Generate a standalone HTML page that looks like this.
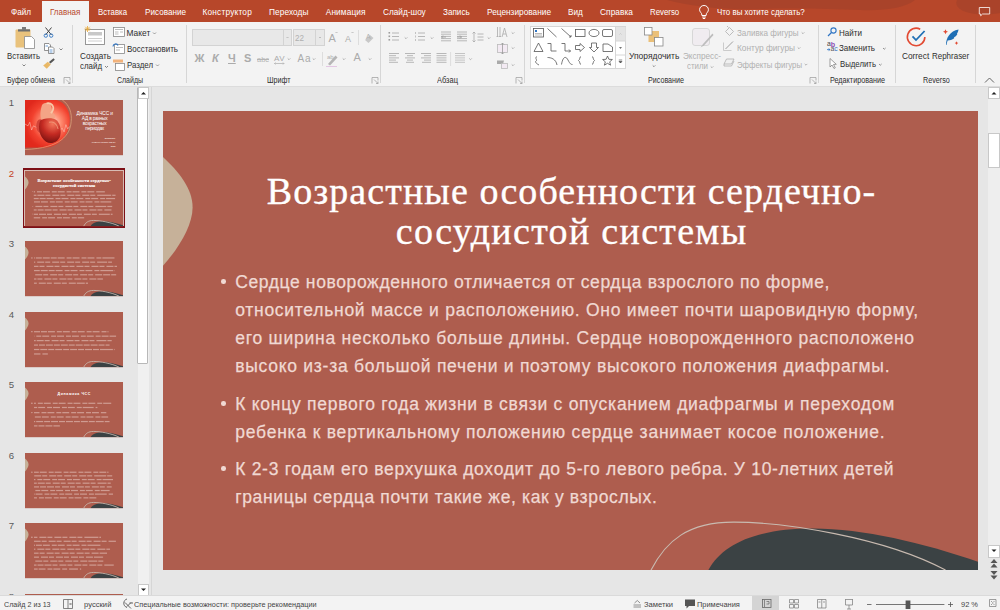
<!DOCTYPE html>
<html><head><meta charset="utf-8"><title>PowerPoint</title>
<style>
html,body{margin:0;padding:0;width:1000px;height:610px;overflow:hidden;background:#E6E6E6;}
.abs{position:absolute;}
.t{position:absolute;white-space:pre;}
svg{overflow:visible}
</style></head><body>
<div class="abs" style="left:0;top:0;width:1000px;height:610px;background:#E6E6E6"></div><div class="abs" style="left:0;top:87px;width:151px;height:509px;background:#E6E6E6;overflow:hidden">
</div>
<div class="abs" style="left:25px;top:100px;width:815px;height:459px;background:#AE5D4E;transform:scale(0.12025);transform-origin:0 0;overflow:hidden"><svg class="abs" style="left:0;top:0" width="815" height="459" viewBox="0 0 815 459">
<defs><radialGradient id="hg" gradientUnits="userSpaceOnUse" cx="215" cy="190" r="230"><stop offset="0" stop-color="#FFE6DA"/><stop offset="0.35" stop-color="#FF8F74"/><stop offset="0.7" stop-color="#F2412E"/><stop offset="1" stop-color="#E0281C"/></radialGradient>
<radialGradient id="hh" gradientUnits="userSpaceOnUse" cx="230" cy="200" r="170"><stop offset="0" stop-color="#F4765A"/><stop offset="0.5" stop-color="#C42A22"/><stop offset="1" stop-color="#6E0E0E"/></radialGradient></defs>
<path d="M0 0 H264 C330 20 380 90 372 179 C365 280 300 380 180 396 L0 396 Z" fill="url(#hg)"/>
<path d="M0 70 V396 H180 C120 390 60 350 30 290 Z" fill="#E42A1C" opacity="0.35"/>
<path d="M310 0 C370 40 392 110 384 180 C375 290 300 400 0 412" fill="none" stroke="#E9B98A" stroke-width="5"/>
<path d="M0 200 L25 215 L40 185 L55 250 L70 215 L100 230 M290 250 L310 235 L325 265 L340 205 L355 240 L372 220" fill="none" stroke="#FFD8CC" stroke-width="5" opacity="0.8"/>
<path d="M140 45 C150 20 195 15 210 35 C225 55 220 95 245 120 C262 140 240 175 205 175 L145 175 C120 140 128 85 140 45 Z" fill="#F4A486"/>
<path d="M180 30 C195 20 230 30 235 60 C238 80 225 100 215 110" fill="none" stroke="#F8C8A8" stroke-width="14"/>
<ellipse cx="125" cy="215" rx="32" ry="55" fill="#D2453A"/>
<path d="M125 175 C105 230 120 310 175 348 C215 372 275 355 292 300 C305 250 292 195 262 168 C230 145 150 148 125 175 Z" fill="url(#hh)"/>
<path d="M200 185 C235 175 265 195 275 240" fill="none" stroke="#F2A080" stroke-width="9" opacity="0.8"/>
</svg>
<div class="t" style="left:428.50px;top:87.14px;font-size:40px;line-height:50.0px;color:#FFFFFF;font-family:'Liberation Sans', sans-serif;letter-spacing:-0.788px;">Динамика ЧСС и</div>
<div class="t" style="left:472.00px;top:129.14px;font-size:40px;line-height:50.0px;color:#FFFFFF;font-family:'Liberation Sans', sans-serif;letter-spacing:-1.580px;">АД в разных</div>
<div class="t" style="left:480.00px;top:169.14px;font-size:40px;line-height:50.0px;color:#FFFFFF;font-family:'Liberation Sans', sans-serif;letter-spacing:-1.622px;">возрастных</div>
<div class="t" style="left:502.00px;top:209.14px;font-size:40px;line-height:50.0px;color:#FFFFFF;font-family:'Liberation Sans', sans-serif;letter-spacing:-2.779px;">периодах</div>
<div class="t" style="left:663.20px;top:307.51px;font-size:18px;line-height:22.5px;color:#F1DDD6;font-family:'Liberation Sans', sans-serif;letter-spacing:-1.449px;font-weight:bold">Выполнил:</div>
<div class="t" style="left:554.20px;top:340.51px;font-size:18px;line-height:22.5px;color:#F1DDD6;font-family:'Liberation Sans', sans-serif;letter-spacing:-0.068px;font-weight:bold">студент группы ПМ-21</div>
<div class="t" style="left:712.20px;top:374.51px;font-size:18px;line-height:22.5px;color:#F1DDD6;font-family:'Liberation Sans', sans-serif;letter-spacing:-0.016px;font-weight:bold">2022</div></div>
<div class="t" style="left:8.80px;top:97.37px;font-size:9.6px;line-height:12.0px;color:#5A5A5A;font-family:'Liberation Sans', sans-serif;">1</div>
<div class="abs" style="left:22.8px;top:168.2px;width:102.4px;height:59.8px;background:#7D1016"></div>
<div class="abs" style="left:24.4px;top:169.8px;width:99.2px;height:56.6px;background:#D8BCB4"></div>
<div class="abs" style="left:25px;top:170.5px;width:815px;height:459px;background:#AE5D4E;transform:scale(0.12025);transform-origin:0 0;overflow:hidden"><svg class="abs" style="left:0;top:0" width="815" height="459" viewBox="0 0 815 459"><path d="M0 46 C15 60 29.6 77 29.6 96.5 C29.6 115 15 138 0 154.8 Z" fill="#C6B199"/><path d="M545.4 459.5 L545.4 458.9 C560 432 595 417.5 650 417.5 C700 417.5 760 432 815 450.7 L815 459.5 Z" fill="#3B4244"/><path d="M488.2 459.5 L488.2 458.8 C503 430 525 411 570.6 411.1 C620 411 720 426 782 458.8 L782.5 459.5" fill="none" stroke="#C8BAB0" stroke-width="7"/></svg>
<div class="t" style="left:103.75px;top:57.42px;font-size:38px;line-height:47.5px;color:#FFFFFF;font-family:'Liberation Serif', serif;letter-spacing:1.067px;-webkit-text-stroke:1.6px #fff">Возрастные особенности сердечно-</div>
<div class="t" style="left:232.75px;top:97.83px;font-size:38px;line-height:47.5px;color:#FFFFFF;font-family:'Liberation Serif', serif;letter-spacing:1.301px;-webkit-text-stroke:1.6px #fff">сосудистой системы</div>
<div class="abs" style="left:73.0px;top:168.2px;width:591.2px;height:10px;background:repeating-linear-gradient(90deg,#F0D9D3 0 58px,transparent 58px 70px,#F0D9D3 70px 112px,transparent 112px 124px);background-position:-47px 0;opacity:0.5"></div>
<div class="abs" style="left:58.2px;top:168.6px;width:4.6px;height:4.6px;border-radius:50%;background:#F0D9D3"></div>
<div class="abs" style="left:73.0px;top:196.8px;width:679.8px;height:10px;background:repeating-linear-gradient(90deg,#F0D9D3 0 58px,transparent 58px 70px,#F0D9D3 70px 112px,transparent 112px 124px);background-position:-94px 0;opacity:0.5"></div>
<div class="abs" style="left:73.0px;top:224.4px;width:675.9px;height:10px;background:repeating-linear-gradient(90deg,#F0D9D3 0 58px,transparent 58px 70px,#F0D9D3 70px 112px,transparent 112px 124px);background-position:-17px 0;opacity:0.5"></div>
<div class="abs" style="left:73.0px;top:252.1px;width:651.3px;height:10px;background:repeating-linear-gradient(90deg,#F0D9D3 0 58px,transparent 58px 70px,#F0D9D3 70px 112px,transparent 112px 124px);background-position:-64px 0;opacity:0.5"></div>
<div class="abs" style="left:73.0px;top:290.2px;width:656.0px;height:10px;background:repeating-linear-gradient(90deg,#F0D9D3 0 58px,transparent 58px 70px,#F0D9D3 70px 112px,transparent 112px 124px);background-position:-111px 0;opacity:0.5"></div>
<div class="abs" style="left:58.2px;top:290.6px;width:4.6px;height:4.6px;border-radius:50%;background:#F0D9D3"></div>
<div class="abs" style="left:73.0px;top:318.5px;width:646.4px;height:10px;background:repeating-linear-gradient(90deg,#F0D9D3 0 58px,transparent 58px 70px,#F0D9D3 70px 112px,transparent 112px 124px);background-position:-34px 0;opacity:0.5"></div>
<div class="abs" style="left:73.0px;top:355.2px;width:655.4px;height:10px;background:repeating-linear-gradient(90deg,#F0D9D3 0 58px,transparent 58px 70px,#F0D9D3 70px 112px,transparent 112px 124px);background-position:-81px 0;opacity:0.5"></div>
<div class="abs" style="left:58.2px;top:355.6px;width:4.6px;height:4.6px;border-radius:50%;background:#F0D9D3"></div>
<div class="abs" style="left:73.0px;top:383.6px;width:418.6px;height:10px;background:repeating-linear-gradient(90deg,#F0D9D3 0 58px,transparent 58px 70px,#F0D9D3 70px 112px,transparent 112px 124px);background-position:-4px 0;opacity:0.5"></div></div>
<div class="t" style="left:8.80px;top:167.87px;font-size:9.6px;line-height:12.0px;color:#C43E1C;font-family:'Liberation Sans', sans-serif;">2</div>
<div class="abs" style="left:25px;top:241px;width:815px;height:459px;background:#AE5D4E;transform:scale(0.12025);transform-origin:0 0;overflow:hidden"><svg class="abs" style="left:0;top:0" width="815" height="459" viewBox="0 0 815 459"><path d="M0 46 C15 60 29.6 77 29.6 96.5 C29.6 115 15 138 0 154.8 Z" fill="#C6B199"/><path d="M545.4 459.5 L545.4 458.9 C560 432 595 417.5 650 417.5 C700 417.5 760 432 815 450.7 L815 459.5 Z" fill="#3B4244"/><path d="M488.2 459.5 L488.2 458.8 C503 430 525 411 570.6 411.1 C620 411 720 426 782 458.8 L782.5 459.5" fill="none" stroke="#C8BAB0" stroke-width="7"/></svg>
<div class="abs" style="left:75.0px;top:136.0px;width:669.0px;height:10px;background:repeating-linear-gradient(90deg,#F0D9D3 0 58px,transparent 58px 70px,#F0D9D3 70px 112px,transparent 112px 124px);background-position:-51px 0;opacity:0.5"></div>
<div class="abs" style="left:52px;top:135px;width:11px;height:11px;border-radius:50%;background:#F0D9D3;opacity:0.7"></div>
<div class="abs" style="left:75.0px;top:171.0px;width:648.0px;height:10px;background:repeating-linear-gradient(90deg,#F0D9D3 0 58px,transparent 58px 70px,#F0D9D3 70px 112px,transparent 112px 124px);background-position:-98px 0;opacity:0.5"></div>
<div class="abs" style="left:75.0px;top:206.0px;width:690.0px;height:10px;background:repeating-linear-gradient(90deg,#F0D9D3 0 58px,transparent 58px 70px,#F0D9D3 70px 112px,transparent 112px 124px);background-position:-21px 0;opacity:0.5"></div>
<div class="abs" style="left:75.0px;top:241.0px;width:669.0px;height:10px;background:repeating-linear-gradient(90deg,#F0D9D3 0 58px,transparent 58px 70px,#F0D9D3 70px 112px,transparent 112px 124px);background-position:-68px 0;opacity:0.5"></div>
<div class="abs" style="left:75.0px;top:276.0px;width:690.0px;height:10px;background:repeating-linear-gradient(90deg,#F0D9D3 0 58px,transparent 58px 70px,#F0D9D3 70px 112px,transparent 112px 124px);background-position:-115px 0;opacity:0.5"></div>
<div class="abs" style="left:75.0px;top:311.0px;width:573.0px;height:10px;background:repeating-linear-gradient(90deg,#F0D9D3 0 58px,transparent 58px 70px,#F0D9D3 70px 112px,transparent 112px 124px);background-position:-38px 0;opacity:0.5"></div>
<div class="abs" style="left:75.0px;top:346.0px;width:449.0px;height:10px;background:repeating-linear-gradient(90deg,#F0D9D3 0 58px,transparent 58px 70px,#F0D9D3 70px 112px,transparent 112px 124px);background-position:-85px 0;opacity:0.5"></div></div>
<div class="t" style="left:8.80px;top:238.37px;font-size:9.6px;line-height:12.0px;color:#5A5A5A;font-family:'Liberation Sans', sans-serif;">3</div>
<div class="abs" style="left:25px;top:311.5px;width:815px;height:459px;background:#AE5D4E;transform:scale(0.12025);transform-origin:0 0;overflow:hidden"><svg class="abs" style="left:0;top:0" width="815" height="459" viewBox="0 0 815 459"><path d="M0 46 C15 60 29.6 77 29.6 96.5 C29.6 115 15 138 0 154.8 Z" fill="#C6B199"/><path d="M545.4 459.5 L545.4 458.9 C560 432 595 417.5 650 417.5 C700 417.5 760 432 815 450.7 L815 459.5 Z" fill="#3B4244"/><path d="M488.2 459.5 L488.2 458.8 C503 430 525 411 570.6 411.1 C620 411 720 426 782 458.8 L782.5 459.5" fill="none" stroke="#C8BAB0" stroke-width="7"/></svg>
<div class="abs" style="left:75.0px;top:159.0px;width:619.0px;height:10px;background:repeating-linear-gradient(90deg,#F0D9D3 0 58px,transparent 58px 70px,#F0D9D3 70px 112px,transparent 112px 124px);background-position:-8px 0;opacity:0.5"></div>
<div class="abs" style="left:52px;top:158px;width:11px;height:11px;border-radius:50%;background:#F0D9D3;opacity:0.7"></div>
<div class="abs" style="left:75.0px;top:196.0px;width:683.0px;height:10px;background:repeating-linear-gradient(90deg,#F0D9D3 0 58px,transparent 58px 70px,#F0D9D3 70px 112px,transparent 112px 124px);background-position:-55px 0;opacity:0.5"></div>
<div class="abs" style="left:75.0px;top:233.0px;width:646.0px;height:10px;background:repeating-linear-gradient(90deg,#F0D9D3 0 58px,transparent 58px 70px,#F0D9D3 70px 112px,transparent 112px 124px);background-position:-102px 0;opacity:0.5"></div>
<div class="abs" style="left:75.0px;top:270.0px;width:628.0px;height:10px;background:repeating-linear-gradient(90deg,#F0D9D3 0 58px,transparent 58px 70px,#F0D9D3 70px 112px,transparent 112px 124px);background-position:-25px 0;opacity:0.5"></div>
<div class="abs" style="left:75.0px;top:307.0px;width:670.0px;height:10px;background:repeating-linear-gradient(90deg,#F0D9D3 0 58px,transparent 58px 70px,#F0D9D3 70px 112px,transparent 112px 124px);background-position:-72px 0;opacity:0.5"></div>
<div class="abs" style="left:75.0px;top:344.0px;width:115.0px;height:10px;background:repeating-linear-gradient(90deg,#F0D9D3 0 58px,transparent 58px 70px,#F0D9D3 70px 112px,transparent 112px 124px);background-position:-119px 0;opacity:0.5"></div></div>
<div class="t" style="left:8.80px;top:308.87px;font-size:9.6px;line-height:12.0px;color:#5A5A5A;font-family:'Liberation Sans', sans-serif;">4</div>
<div class="abs" style="left:25px;top:382px;width:815px;height:459px;background:#AE5D4E;transform:scale(0.12025);transform-origin:0 0;overflow:hidden"><svg class="abs" style="left:0;top:0" width="815" height="459" viewBox="0 0 815 459"><path d="M0 46 C15 60 29.6 77 29.6 96.5 C29.6 115 15 138 0 154.8 Z" fill="#C6B199"/><path d="M545.4 459.5 L545.4 458.9 C560 432 595 417.5 650 417.5 C700 417.5 760 432 815 450.7 L815 459.5 Z" fill="#3B4244"/><path d="M488.2 459.5 L488.2 458.8 C503 430 525 411 570.6 411.1 C620 411 720 426 782 458.8 L782.5 459.5" fill="none" stroke="#C8BAB0" stroke-width="7"/></svg>
<div class="t" style="left:271.00px;top:78.86px;font-size:30px;line-height:37.5px;color:#FFFFFF;font-family:'Liberation Sans', sans-serif;letter-spacing:4.845px;font-weight:bold">Динамика ЧСС</div>
<div class="abs" style="left:75.0px;top:172.0px;width:642.0px;height:10px;background:repeating-linear-gradient(90deg,#F0D9D3 0 58px,transparent 58px 70px,#F0D9D3 70px 112px,transparent 112px 124px);background-position:-42px 0;opacity:0.5"></div>
<div class="abs" style="left:52px;top:171px;width:11px;height:11px;border-radius:50%;background:#F0D9D3;opacity:0.7"></div>
<div class="abs" style="left:75.0px;top:207.0px;width:527.0px;height:10px;background:repeating-linear-gradient(90deg,#F0D9D3 0 58px,transparent 58px 70px,#F0D9D3 70px 112px,transparent 112px 124px);background-position:-89px 0;opacity:0.5"></div>
<div class="abs" style="left:75.0px;top:250.0px;width:601.0px;height:10px;background:repeating-linear-gradient(90deg,#F0D9D3 0 58px,transparent 58px 70px,#F0D9D3 70px 112px,transparent 112px 124px);background-position:-12px 0;opacity:0.5"></div>
<div class="abs" style="left:52px;top:249px;width:11px;height:11px;border-radius:50%;background:#F0D9D3;opacity:0.7"></div>
<div class="abs" style="left:75.0px;top:286.0px;width:619.0px;height:10px;background:repeating-linear-gradient(90deg,#F0D9D3 0 58px,transparent 58px 70px,#F0D9D3 70px 112px,transparent 112px 124px);background-position:-59px 0;opacity:0.5"></div>
<div class="abs" style="left:75.0px;top:324.0px;width:628.0px;height:10px;background:repeating-linear-gradient(90deg,#F0D9D3 0 58px,transparent 58px 70px,#F0D9D3 70px 112px,transparent 112px 124px);background-position:-106px 0;opacity:0.5"></div>
<div class="abs" style="left:75.0px;top:360.0px;width:215.0px;height:10px;background:repeating-linear-gradient(90deg,#F0D9D3 0 58px,transparent 58px 70px,#F0D9D3 70px 112px,transparent 112px 124px);background-position:-29px 0;opacity:0.5"></div></div>
<div class="t" style="left:8.80px;top:379.37px;font-size:9.6px;line-height:12.0px;color:#5A5A5A;font-family:'Liberation Sans', sans-serif;">5</div>
<div class="abs" style="left:25px;top:452.5px;width:815px;height:459px;background:#AE5D4E;transform:scale(0.12025);transform-origin:0 0;overflow:hidden"><svg class="abs" style="left:0;top:0" width="815" height="459" viewBox="0 0 815 459"><path d="M0 46 C15 60 29.6 77 29.6 96.5 C29.6 115 15 138 0 154.8 Z" fill="#C6B199"/><path d="M545.4 459.5 L545.4 458.9 C560 432 595 417.5 650 417.5 C700 417.5 760 432 815 450.7 L815 459.5 Z" fill="#3B4244"/><path d="M488.2 459.5 L488.2 458.8 C503 430 525 411 570.6 411.1 C620 411 720 426 782 458.8 L782.5 459.5" fill="none" stroke="#C8BAB0" stroke-width="7"/></svg>
<div class="abs" style="left:75.0px;top:155.0px;width:619.0px;height:10px;background:repeating-linear-gradient(90deg,#F0D9D3 0 58px,transparent 58px 70px,#F0D9D3 70px 112px,transparent 112px 124px);background-position:-76px 0;opacity:0.5"></div>
<div class="abs" style="left:52px;top:154.0px;width:11px;height:11px;border-radius:50%;background:#F0D9D3;opacity:0.7"></div>
<div class="abs" style="left:75.0px;top:185.4px;width:665.0px;height:10px;background:repeating-linear-gradient(90deg,#F0D9D3 0 58px,transparent 58px 70px,#F0D9D3 70px 112px,transparent 112px 124px);background-position:-123px 0;opacity:0.5"></div>
<div class="abs" style="left:75.0px;top:215.8px;width:657.0px;height:10px;background:repeating-linear-gradient(90deg,#F0D9D3 0 58px,transparent 58px 70px,#F0D9D3 70px 112px,transparent 112px 124px);background-position:-46px 0;opacity:0.5"></div>
<div class="abs" style="left:75.0px;top:246.2px;width:638.0px;height:10px;background:repeating-linear-gradient(90deg,#F0D9D3 0 58px,transparent 58px 70px,#F0D9D3 70px 112px,transparent 112px 124px);background-position:-93px 0;opacity:0.5"></div>
<div class="abs" style="left:75.0px;top:276.6px;width:646.0px;height:10px;background:repeating-linear-gradient(90deg,#F0D9D3 0 58px,transparent 58px 70px,#F0D9D3 70px 112px,transparent 112px 124px);background-position:-16px 0;opacity:0.5"></div>
<div class="abs" style="left:75.0px;top:307.0px;width:634.0px;height:10px;background:repeating-linear-gradient(90deg,#F0D9D3 0 58px,transparent 58px 70px,#F0D9D3 70px 112px,transparent 112px 124px);background-position:-63px 0;opacity:0.5"></div>
<div class="abs" style="left:75.0px;top:337.4px;width:657.0px;height:10px;background:repeating-linear-gradient(90deg,#F0D9D3 0 58px,transparent 58px 70px,#F0D9D3 70px 112px,transparent 112px 124px);background-position:-110px 0;opacity:0.5"></div>
<div class="abs" style="left:75.0px;top:367.8px;width:518.0px;height:10px;background:repeating-linear-gradient(90deg,#F0D9D3 0 58px,transparent 58px 70px,#F0D9D3 70px 112px,transparent 112px 124px);background-position:-33px 0;opacity:0.5"></div></div>
<div class="t" style="left:8.80px;top:449.87px;font-size:9.6px;line-height:12.0px;color:#5A5A5A;font-family:'Liberation Sans', sans-serif;">6</div>
<div class="abs" style="left:25px;top:523px;width:815px;height:459px;background:#AE5D4E;transform:scale(0.12025);transform-origin:0 0;overflow:hidden"><svg class="abs" style="left:0;top:0" width="815" height="459" viewBox="0 0 815 459"><path d="M0 46 C15 60 29.6 77 29.6 96.5 C29.6 115 15 138 0 154.8 Z" fill="#C6B199"/><path d="M545.4 459.5 L545.4 458.9 C560 432 595 417.5 650 417.5 C700 417.5 760 432 815 450.7 L815 459.5 Z" fill="#3B4244"/><path d="M488.2 459.5 L488.2 458.8 C503 430 525 411 570.6 411.1 C620 411 720 426 782 458.8 L782.5 459.5" fill="none" stroke="#C8BAB0" stroke-width="7"/></svg>
<div class="abs" style="left:75.0px;top:114.0px;width:557.0px;height:10px;background:repeating-linear-gradient(90deg,#F0D9D3 0 58px,transparent 58px 70px,#F0D9D3 70px 112px,transparent 112px 124px);background-position:-80px 0;opacity:0.5"></div>
<div class="abs" style="left:52px;top:113px;width:11px;height:11px;border-radius:50%;background:#F0D9D3;opacity:0.7"></div>
<div class="abs" style="left:75.0px;top:147.0px;width:681.0px;height:10px;background:repeating-linear-gradient(90deg,#F0D9D3 0 58px,transparent 58px 70px,#F0D9D3 70px 112px,transparent 112px 124px);background-position:-3px 0;opacity:0.5"></div>
<div class="abs" style="left:75.0px;top:180.0px;width:552.0px;height:10px;background:repeating-linear-gradient(90deg,#F0D9D3 0 58px,transparent 58px 70px,#F0D9D3 70px 112px,transparent 112px 124px);background-position:-50px 0;opacity:0.5"></div>
<div class="abs" style="left:75.0px;top:213.0px;width:632.0px;height:10px;background:repeating-linear-gradient(90deg,#F0D9D3 0 58px,transparent 58px 70px,#F0D9D3 70px 112px,transparent 112px 124px);background-position:-97px 0;opacity:0.5"></div>
<div class="abs" style="left:75.0px;top:246.0px;width:607.0px;height:10px;background:repeating-linear-gradient(90deg,#F0D9D3 0 58px,transparent 58px 70px,#F0D9D3 70px 112px,transparent 112px 124px);background-position:-20px 0;opacity:0.5"></div>
<div class="abs" style="left:75.0px;top:279.0px;width:582.0px;height:10px;background:repeating-linear-gradient(90deg,#F0D9D3 0 58px,transparent 58px 70px,#F0D9D3 70px 112px,transparent 112px 124px);background-position:-67px 0;opacity:0.5"></div>
<div class="abs" style="left:75.0px;top:312.0px;width:582.0px;height:10px;background:repeating-linear-gradient(90deg,#F0D9D3 0 58px,transparent 58px 70px,#F0D9D3 70px 112px,transparent 112px 124px);background-position:-114px 0;opacity:0.5"></div>
<div class="abs" style="left:75.0px;top:345.0px;width:663.0px;height:10px;background:repeating-linear-gradient(90deg,#F0D9D3 0 58px,transparent 58px 70px,#F0D9D3 70px 112px,transparent 112px 124px);background-position:-37px 0;opacity:0.5"></div>
<div class="abs" style="left:75.0px;top:378.0px;width:392.0px;height:10px;background:repeating-linear-gradient(90deg,#F0D9D3 0 58px,transparent 58px 70px,#F0D9D3 70px 112px,transparent 112px 124px);background-position:-84px 0;opacity:0.5"></div></div>
<div class="t" style="left:8.80px;top:520.37px;font-size:9.6px;line-height:12.0px;color:#5A5A5A;font-family:'Liberation Sans', sans-serif;">7</div>
<div class="abs" style="left:25px;top:593.5px;width:815px;height:459px;background:#AE5D4E;transform:scale(0.12025);transform-origin:0 0;overflow:hidden"></div>
<div class="t" style="left:8.80px;top:590.87px;font-size:9.6px;line-height:12.0px;color:#5A5A5A;font-family:'Liberation Sans', sans-serif;">8</div>
<div class="abs" style="left:137.5px;top:86.5px;width:11px;height:509.5px;background:#F0F0F0"></div>
<div class="abs" style="left:137.3px;top:86.5px;width:9.2px;height:275px;background:#fff;border:1px solid #B8B8B8;border-radius:1px"></div>
<div class="abs" style="left:137.5px;top:86.5px;width:9px;height:10.5px;background:#fff;border:1px solid #C8C8C8"></div>
<div class="abs" style="left:137.5px;top:584.3px;width:9px;height:10.5px;background:#fff;border:1px solid #C8C8C8"></div>
<svg class="abs" style="left:137.5px;top:86.5px" width="11" height="12"><path d="M3 7.5 L5.5 5 L8 7.5 Z" fill="#222"/></svg>
<svg class="abs" style="left:137.5px;top:584.3px" width="11" height="12"><path d="M3 4.5 L5.5 7 L8 4.5 Z" fill="#222"/></svg>
<div class="abs" style="left:151px;top:87px;width:1px;height:509px;background:#D6D6D6"></div><div class="abs" style="left:163px;top:110.6px;width:815px;height:459px;background:#AE5D4E;overflow:hidden"><svg class="abs" style="left:0;top:0" width="815" height="459" viewBox="0 0 815 459"><path d="M0 46 C15 60 29.6 77 29.6 96.5 C29.6 115 15 138 0 154.8 Z" fill="#C6B199"/><path d="M545.4 459.5 L545.4 458.9 C560 432 595 417.5 650 417.5 C700 417.5 760 432 815 450.7 L815 459.5 Z" fill="#3B4244"/><path d="M488.2 459.5 L488.2 458.8 C503 430 525 411 570.6 411.1 C620 411 720 426 782 458.8 L782.5 459.5" fill="none" stroke="#C8BAB0" stroke-width="1.1"/></svg>
<div class="t" style="left:103.75px;top:57.42px;font-size:38px;line-height:47.5px;color:#FFFFFF;font-family:'Liberation Serif', serif;letter-spacing:1.067px;-webkit-text-stroke:0.35px #fff">Возрастные особенности сердечно-</div>
<div class="t" style="left:232.75px;top:97.83px;font-size:38px;line-height:47.5px;color:#FFFFFF;font-family:'Liberation Serif', serif;letter-spacing:1.301px;-webkit-text-stroke:0.35px #fff">сосудистой системы</div>
<div class="t" style="left:72.20px;top:161.20px;font-size:17.5px;line-height:21.88px;color:#F0D9D3;font-family:'Liberation Sans', sans-serif;letter-spacing:0.618px;-webkit-text-stroke:0.25px #F0D9D3">Сердце новорожденного отличается от сердца взрослого по форме,</div>
<div class="abs" style="left:58.2px;top:168.6px;width:4.6px;height:4.6px;border-radius:50%;background:#F0D9D3"></div>
<div class="t" style="left:72.20px;top:189.80px;font-size:17.5px;line-height:21.88px;color:#F0D9D3;font-family:'Liberation Sans', sans-serif;letter-spacing:0.722px;-webkit-text-stroke:0.25px #F0D9D3">относительной массе и расположению. Оно имеет почти шаровидную форму,</div>
<div class="t" style="left:72.20px;top:217.40px;font-size:17.5px;line-height:21.88px;color:#F0D9D3;font-family:'Liberation Sans', sans-serif;letter-spacing:0.767px;-webkit-text-stroke:0.25px #F0D9D3">его ширина несколько больше длины. Сердце новорожденного расположено</div>
<div class="t" style="left:72.20px;top:245.10px;font-size:17.5px;line-height:21.88px;color:#F0D9D3;font-family:'Liberation Sans', sans-serif;letter-spacing:0.731px;-webkit-text-stroke:0.25px #F0D9D3">высоко из-за большой печени и поэтому высокого положения диафрагмы.</div>
<div class="t" style="left:72.20px;top:283.20px;font-size:17.5px;line-height:21.88px;color:#F0D9D3;font-family:'Liberation Sans', sans-serif;letter-spacing:0.741px;-webkit-text-stroke:0.25px #F0D9D3">К концу первого года жизни в связи с опусканием диафрагмы и переходом</div>
<div class="abs" style="left:58.2px;top:290.6px;width:4.6px;height:4.6px;border-radius:50%;background:#F0D9D3"></div>
<div class="t" style="left:72.20px;top:311.50px;font-size:17.5px;line-height:21.88px;color:#F0D9D3;font-family:'Liberation Sans', sans-serif;letter-spacing:0.789px;-webkit-text-stroke:0.25px #F0D9D3">ребенка к вертикальному положению сердце занимает косое положение.</div>
<div class="t" style="left:72.20px;top:348.20px;font-size:17.5px;line-height:21.88px;color:#F0D9D3;font-family:'Liberation Sans', sans-serif;letter-spacing:0.710px;-webkit-text-stroke:0.25px #F0D9D3">К 2-3 годам его верхушка доходит до 5-го левого ребра. У 10-летних детей</div>
<div class="abs" style="left:58.2px;top:355.6px;width:4.6px;height:4.6px;border-radius:50%;background:#F0D9D3"></div>
<div class="t" style="left:72.20px;top:376.60px;font-size:17.5px;line-height:21.88px;color:#F0D9D3;font-family:'Liberation Sans', sans-serif;letter-spacing:0.649px;-webkit-text-stroke:0.25px #F0D9D3">границы сердца почти такие же, как у взрослых.</div></div>
<div class="abs" style="left:988px;top:87px;width:12px;height:470px;background:#EEEEEE"></div>
<div class="abs" style="left:988px;top:86.6px;width:10px;height:10.5px;background:#fff;border:1px solid #C8C8C8"></div>
<div class="abs" style="left:988px;top:132.5px;width:10px;height:33px;background:#fff;border:1px solid #C8C8C8"></div>
<div class="abs" style="left:988px;top:545.3px;width:10px;height:10.6px;background:#fff;border:1px solid #C8C8C8"></div>
<svg class="abs" style="left:988px;top:86.6px" width="12" height="12"><path d="M3.5 7.5 L6 5 L8.5 7.5 Z" fill="#222"/></svg>
<svg class="abs" style="left:988px;top:545.3px" width="12" height="12"><path d="M3.5 4.5 L6 7 L8.5 4.5 Z" fill="#222"/></svg>
<svg class="abs" style="left:988px;top:557px" width="12" height="24"><path d="M2.5 6 L6 2 L9.5 6 Z M2.5 10.5 L6 6.5 L9.5 10.5 Z M2.5 14 L6 18 L9.5 14 Z M2.5 18.5 L6 22.5 L9.5 18.5 Z" fill="#555"/></svg><div class="abs" style="left:0;top:596px;width:1000px;height:14px;background:#F3F3F3"></div>
<div class="abs" style="left:0;top:595px;width:1000px;height:1px;background:#DADADA"></div>
<div class="abs" style="left:752.4px;top:596px;width:27px;height:14px;background:#D4D4D4"></div>
<div class="t" style="left:4.30px;top:600.33px;font-size:8px;line-height:10.0px;color:#444;font-family:'Liberation Sans', sans-serif;transform:scaleX(0.8929);transform-origin:0 0;">Слайд 2 из 13</div>
<div class="t" style="left:84.30px;top:600.33px;font-size:8px;line-height:10.0px;color:#444;font-family:'Liberation Sans', sans-serif;transform:scaleX(0.9541);transform-origin:0 0;">русский</div>
<div class="t" style="left:133.90px;top:600.33px;font-size:8px;line-height:10.0px;color:#444;font-family:'Liberation Sans', sans-serif;transform:scaleX(0.9102);transform-origin:0 0;">Специальные возможности: проверьте рекомендации</div>
<div class="t" style="left:643.90px;top:600.33px;font-size:8px;line-height:10.0px;color:#444;font-family:'Liberation Sans', sans-serif;transform:scaleX(0.9474);transform-origin:0 0;">Заметки</div>
<div class="t" style="left:697.10px;top:600.33px;font-size:8px;line-height:10.0px;color:#444;font-family:'Liberation Sans', sans-serif;transform:scaleX(0.9267);transform-origin:0 0;">Примечания</div>
<div class="t" style="left:961.10px;top:600.33px;font-size:8px;line-height:10.0px;color:#444;font-family:'Liberation Sans', sans-serif;transform:scaleX(0.9323);transform-origin:0 0;">92 %</div>
<svg class="abs" style="left:0;top:0" width="1000" height="610" viewBox="0 0 1000 610"><path d="M63.5 599.5 H68 V608.5 H63.5 Z M68 599.5 H72.5 V608.5 H68" fill="none" stroke="#666" stroke-width="0.8"/><path d="M69.5 603 L71.5 605 M71.5 603 L69.5 605" stroke="#666" stroke-width="0.7"/><path d="M127 599 C123 600 122.5 606 127 607.5 M125 602.5 L131 608.5 M131 602.5 L127 606.5 M129.5 603 H133" fill="none" stroke="#555" stroke-width="0.9"/><path d="M633.5 605 H641 M633.5 607 H641 M634.5 603 L637.3 600.5 L640 603" fill="none" stroke="#777" stroke-width="0.8"/><path d="M685 599.5 H695 V606 H689 L686.5 608.5 V606 H685 Z" fill="#555"/><rect x="762.5" y="599.5" width="8.5" height="8" fill="none" stroke="#666" stroke-width="0.8"/><path d="M764.5 600 V607 M766.5 601.5 H769 V604 H766.5" fill="none" stroke="#666" stroke-width="0.7"/><path d="M789.5 599.5 H793.5 V603 H789.5 Z M794.5 599.5 H798.5 V603 H794.5 Z M789.5 604.5 H793.5 V608 H789.5 Z M794.5 604.5 H798.5 V608 H794.5 Z" fill="none" stroke="#777" stroke-width="0.7"/><path d="M817.5 599.5 H826 V608 H817.5 Z M821.75 599.5 V608 M818.5 602 H820.5 M823 602 H825" fill="none" stroke="#777" stroke-width="0.7"/><path d="M845 599.5 H853 M845.5 599.5 V605 H852.5 V599.5 M849 605 V609 M847 609 H851" fill="none" stroke="#777" stroke-width="0.7"/><path d="M867 604.5 H871.5 M876 604.5 H944.4 M948 604.5 H953 M950.5 602 V607" stroke="#555" stroke-width="0.8"/><rect x="905.6" y="600.5" width="4.8" height="8.5" fill="#555"/><path d="M989.5 599.5 H996 V606.5 H989.5 Z M991 601 L992.5 602.5 M994.5 601 L993 602.5 M991 605 L992.5 603.5 M994.5 605 L993 603.5" fill="none" stroke="#777" stroke-width="0.7"/></svg><div class="abs" style="left:0;top:0;width:1000px;height:22px;background:#B7472A"></div>
<svg class="abs" style="left:0;top:0" width="1000" height="22" viewBox="0 0 1000 22">
<path d="M667 0 C690 6 720 10 760 9 C800 8 830 9 860 10 C885 11 905 8 915 0 Z" fill="#9E3F2A" opacity="0.55"/>
<path d="M957 0 C954 6 960 12 975 14 C985 15 995 14 1000 13 V0 Z" fill="#9E3F2A" opacity="0.5"/>
</svg>
<div class="abs" style="left:42px;top:1px;width:47px;height:21px;background:#F3F3F3"></div>
<div class="t" style="left:10.50px;top:7.13px;font-size:8.3px;line-height:10.38px;color:#FFFFFF;font-family:'Liberation Sans', sans-serif;transform:scaleX(0.9801);transform-origin:0 0;">Файл</div>
<div class="t" style="left:50.10px;top:7.13px;font-size:8.3px;line-height:10.38px;color:#B7472A;font-family:'Liberation Sans', sans-serif;transform:scaleX(0.9622);transform-origin:0 0;">Главная</div>
<div class="t" style="left:97.90px;top:7.13px;font-size:8.3px;line-height:10.38px;color:#FFFFFF;font-family:'Liberation Sans', sans-serif;transform:scaleX(0.9402);transform-origin:0 0;">Вставка</div>
<div class="t" style="left:144.50px;top:7.13px;font-size:8.3px;line-height:10.38px;color:#FFFFFF;font-family:'Liberation Sans', sans-serif;transform:scaleX(0.9809);transform-origin:0 0;">Рисование</div>
<div class="t" style="left:202.50px;top:7.13px;font-size:8.3px;line-height:10.38px;color:#FFFFFF;font-family:'Liberation Sans', sans-serif;letter-spacing:0.194px;">Конструктор</div>
<div class="t" style="left:269.00px;top:7.13px;font-size:8.3px;line-height:10.38px;color:#FFFFFF;font-family:'Liberation Sans', sans-serif;letter-spacing:0.083px;">Переходы</div>
<div class="t" style="left:325.75px;top:7.13px;font-size:8.3px;line-height:10.38px;color:#FFFFFF;font-family:'Liberation Sans', sans-serif;letter-spacing:0.114px;">Анимация</div>
<div class="t" style="left:382.75px;top:7.13px;font-size:8.3px;line-height:10.38px;color:#FFFFFF;font-family:'Liberation Sans', sans-serif;transform:scaleX(0.9938);transform-origin:0 0;">Слайд-шоу</div>
<div class="t" style="left:442.50px;top:7.13px;font-size:8.3px;line-height:10.38px;color:#FFFFFF;font-family:'Liberation Sans', sans-serif;transform:scaleX(0.9822);transform-origin:0 0;">Запись</div>
<div class="t" style="left:487.00px;top:7.13px;font-size:8.3px;line-height:10.38px;color:#FFFFFF;font-family:'Liberation Sans', sans-serif;transform:scaleX(0.9988);transform-origin:0 0;">Рецензирование</div>
<div class="t" style="left:568.25px;top:7.13px;font-size:8.3px;line-height:10.38px;color:#FFFFFF;font-family:'Liberation Sans', sans-serif;transform:scaleX(0.9823);transform-origin:0 0;">Вид</div>
<div class="t" style="left:600.00px;top:7.13px;font-size:8.3px;line-height:10.38px;color:#FFFFFF;font-family:'Liberation Sans', sans-serif;letter-spacing:0.073px;">Справка</div>
<div class="t" style="left:650.00px;top:7.13px;font-size:8.3px;line-height:10.38px;color:#FFFFFF;font-family:'Liberation Sans', sans-serif;transform:scaleX(0.9464);transform-origin:0 0;">Reverso</div>
<div class="t" style="left:716.50px;top:7.13px;font-size:8.3px;line-height:10.38px;color:#FFFFFF;font-family:'Liberation Sans', sans-serif;transform:scaleX(0.9566);transform-origin:0 0;">Что вы хотите сделать?</div>
<svg class="abs" style="left:697px;top:4px" width="14" height="16" viewBox="0 0 14 16">
<path d="M7 1.5 C4.3 1.5 2.6 3.4 2.6 5.7 C2.6 7.5 3.8 8.4 4.6 9.6 L4.9 11.5 L9.1 11.5 L9.4 9.6 C10.2 8.4 11.4 7.5 11.4 5.7 C11.4 3.4 9.7 1.5 7 1.5 Z" fill="none" stroke="#fff" stroke-width="1"/>
<path d="M5.2 13 H8.8 M5.8 14.5 H8.2" stroke="#fff" stroke-width="1"/></svg>
<svg class="abs" style="left:978px;top:6px" width="13" height="11" viewBox="0 0 13 11">
<path d="M1.3 1.5 H11.7 V8 H4.5 L2.7 9.8 V8 H1.3 Z" fill="none" stroke="#fff" stroke-width="0.8"/></svg><div class="abs" style="left:0;top:22px;width:1000px;height:64px;background:#F3F3F3"></div>
<div class="abs" style="left:0;top:86px;width:1000px;height:1px;background:#DCDCDC"></div>
<div class="abs" style="left:72.0px;top:25px;width:1px;height:58px;background:#D6D6D6"></div>
<div class="abs" style="left:186.0px;top:25px;width:1px;height:58px;background:#D6D6D6"></div>
<div class="abs" style="left:380.1px;top:25px;width:1px;height:58px;background:#D6D6D6"></div>
<div class="abs" style="left:523.9px;top:25px;width:1px;height:58px;background:#D6D6D6"></div>
<div class="abs" style="left:817.5px;top:25px;width:1px;height:58px;background:#D6D6D6"></div>
<div class="abs" style="left:895.1px;top:25px;width:1px;height:58px;background:#D6D6D6"></div>
<div class="abs" style="left:974.9px;top:25px;width:1px;height:58px;background:#D6D6D6"></div>
<svg class="abs" style="left:0;top:0" width="1000" height="90" viewBox="0 0 1000 90"><rect x="15.5" y="29.5" width="15" height="18" rx="1" fill="#E9C27C"/><rect x="18" y="29.3" width="12" height="2.2" fill="#6E6E6E"/><rect x="22" y="27" width="4" height="3" fill="#7A7A7A"/><path d="M24.5 36.5 H31.5 L34.5 39.5 V48.5 H24.5 Z" fill="#fff" stroke="#8A8A8A" stroke-width="0.8"/><path d="M22.5 64.5 L24 66 L25.5 64.5" fill="none" stroke="#666" stroke-width="0.8"/><path d="M45.5 27.5 L51.5 35 M51.5 27.5 L45.5 35" stroke="#444" stroke-width="1"/><circle cx="45.8" cy="35.6" r="1.7" fill="none" stroke="#2F75C4" stroke-width="0.9"/><circle cx="51.2" cy="35.6" r="1.7" fill="none" stroke="#2F75C4" stroke-width="0.9"/><path d="M44.5 43.5 H49 L50.5 45 V50.5 H44.5 Z" fill="#fff" stroke="#777" stroke-width="0.8"/><path d="M48.5 47 H52.5 L54 48.5 V53.5 H48.5 Z" fill="#fff" stroke="#777" stroke-width="0.8"/><path d="M45.5 46 H48 M49.5 50 H52.5 M49.5 52 H52.5" stroke="#2F75C4" stroke-width="0.7"/><path d="M59.5 48.5 L61 50 L62.5 48.5" fill="none" stroke="#666" stroke-width="0.8"/><path d="M49 62 L53.5 58.3 L54.8 59.8 L50.5 63.6 Z" fill="#555"/><path d="M43.2 65.5 L47.8 61.8 L50.8 64.6 L46.8 68.8 Z" fill="#E9B866"/><path d="M64 83.5 V77.5 H70 V80.5" fill="none" stroke="#9A9A9A" stroke-width="0.7"/><path d="M66 79.5 L70 83.5 M70 81.5 V83.5 H68" fill="none" stroke="#9A9A9A" stroke-width="0.7"/><path d="M372 83.5 V77.5 H378 V80.5" fill="none" stroke="#9A9A9A" stroke-width="0.7"/><path d="M374 79.5 L378 83.5 M378 81.5 V83.5 H376" fill="none" stroke="#9A9A9A" stroke-width="0.7"/><path d="M516 83.5 V77.5 H522 V80.5" fill="none" stroke="#9A9A9A" stroke-width="0.7"/><path d="M518 79.5 L522 83.5 M522 81.5 V83.5 H520" fill="none" stroke="#9A9A9A" stroke-width="0.7"/><path d="M810 83.5 V77.5 H816 V80.5" fill="none" stroke="#9A9A9A" stroke-width="0.7"/><path d="M812 79.5 L816 83.5 M816 81.5 V83.5 H814" fill="none" stroke="#9A9A9A" stroke-width="0.7"/><rect x="85.5" y="29.5" width="19" height="15" fill="#fff" stroke="#8C8C8C" stroke-width="0.9"/><rect x="88" y="32" width="14" height="3.5" fill="#C8C8C8"/><path d="M88 38.5 H102 M88 41 H102" stroke="#C8C8C8" stroke-width="0.9"/><path d="M87.5 26 V32 M84.5 29 H90.5 M85.3 26.8 L89.7 31.2 M89.7 26.8 L85.3 31.2" stroke="#E9A93A" stroke-width="0.8"/><path d="M105 66 L106.5 67.5 L108 66" fill="none" stroke="#666" stroke-width="0.8"/><rect x="113.5" y="27.5" width="11" height="9" fill="#fff" stroke="#888" stroke-width="0.8"/><path d="M115 29.5 H123 M115 32.0 H118.5 M120 32.0 H123 M115 34.0 H118.5" stroke="#BDBDBD" stroke-width="1"/><rect x="114.5" y="44.5" width="10" height="9" fill="#fff" stroke="#888" stroke-width="0.8"/><path d="M116 47.5 H123 M116 50.0 H120" stroke="#BDBDBD" stroke-width="1"/><path d="M113 46.5 C113 43.5 117 43.0 118 45.5" fill="none" stroke="#2F75C4" stroke-width="1.1"/><rect x="113" y="59.5" width="10" height="3" fill="#F2B27A"/><rect x="115.5" y="63.5" width="9" height="7" fill="#fff" stroke="#888" stroke-width="0.8"/><path d="M153 32.5 L154.5 34 L156 32.5" fill="none" stroke="#777" stroke-width="0.7"/><path d="M156 64.5 L157.5 66 L159 64.5" fill="none" stroke="#777" stroke-width="0.7"/><rect x="192.5" y="29.5" width="99" height="16" fill="#E8E8E8" stroke="#D3D3D3" stroke-width="1"/><path d="M283.5 30 V45" stroke="#D3D3D3"/><path d="M286.5 37 L287.5 38 L288.5 37" fill="none" stroke="#AAA" stroke-width="0.7"/><rect x="293.5" y="29.5" width="31" height="16" fill="#E8E8E8" stroke="#D3D3D3" stroke-width="1"/><path d="M315.5 30 V45" stroke="#D3D3D3"/><path d="M319 37 L320 38 L321 37" fill="none" stroke="#AAA" stroke-width="0.7"/><path d="M358.5 30 V45" stroke="#DDD"/><path d="M322.5 52 V66" stroke="#DDD"/><path d="M335.5 33 L336.5 32 L337.5 33" fill="none" stroke="#AAA" stroke-width="0.7"/><path d="M351.5 32 L352.5 33 L353.5 32" fill="none" stroke="#AAA" stroke-width="0.7"/><path d="M365 40 L370 35 L373.5 38 L368.5 43 Z" fill="#C8C8C8"/><path d="M287.7 58.4 L289 59.7 L290.3 58.4" fill="none" stroke="#9A9A9A" stroke-width="0.7"/><path d="M312.7 58.4 L314 59.7 L315.3 58.4" fill="none" stroke="#9A9A9A" stroke-width="0.7"/><path d="M342.7 58.4 L344 59.7 L345.3 58.4" fill="none" stroke="#9A9A9A" stroke-width="0.7"/><path d="M368.7 58.4 L370 59.7 L371.3 58.4" fill="none" stroke="#9A9A9A" stroke-width="0.7"/><path d="M404.7 37.4 L406 38.7 L407.3 37.4" fill="none" stroke="#9A9A9A" stroke-width="0.7"/><path d="M430.7 37.4 L432 38.7 L433.3 37.4" fill="none" stroke="#9A9A9A" stroke-width="0.7"/><path d="M487.7 37.4 L489 38.7 L490.3 37.4" fill="none" stroke="#9A9A9A" stroke-width="0.7"/><path d="M511.7 32.4 L513 33.7 L514.3 32.4" fill="none" stroke="#9A9A9A" stroke-width="0.7"/><path d="M511.7 47.4 L513 48.7 L514.3 47.4" fill="none" stroke="#9A9A9A" stroke-width="0.7"/><path d="M511.7 64.4 L513 65.7 L514.3 64.4" fill="none" stroke="#9A9A9A" stroke-width="0.7"/><path d="M469.2 58.4 L470.5 59.7 L471.8 58.4" fill="none" stroke="#9A9A9A" stroke-width="0.7"/><path d="M801.7 32.4 L803 33.7 L804.3 32.4" fill="none" stroke="#9A9A9A" stroke-width="0.7"/><path d="M797.7 47.4 L799 48.7 L800.3 47.4" fill="none" stroke="#9A9A9A" stroke-width="0.7"/><path d="M804.7 63.9 L806 65.2 L807.3 63.9" fill="none" stroke="#9A9A9A" stroke-width="0.7"/><path d="M710.7 66.4 L712 67.7 L713.3 66.4" fill="none" stroke="#9A9A9A" stroke-width="0.7"/><path d="M652.7 65.4 L654 66.7 L655.3 65.4" fill="none" stroke="#666" stroke-width="0.7"/><path d="M274.5 63.5 H284 M275.5 62.5 L274.5 63.5 L275.5 64.5 M283 62.5 L284 63.5 L283 64.5" fill="none" stroke="#AAA" stroke-width="0.7"/><path d="M328 64 L335.5 55.5 L337.5 57.5 L330 65.5 Z" fill="#B5B5B5"/><path d="M326 66.5 H337" stroke="#E3C6E3" stroke-width="1"/><rect x="388.5" y="32" width="1.6" height="1.6" fill="#9E9E9E"/><rect x="388.5" y="35.5" width="1.6" height="1.6" fill="#9E9E9E"/><rect x="388.5" y="39" width="1.6" height="1.6" fill="#9E9E9E"/><path d="M392 33.0 H399" stroke="#B0B0B0" stroke-width="0.9"/><path d="M392 36.5 H399" stroke="#B0B0B0" stroke-width="0.9"/><path d="M392 40.0 H399" stroke="#B0B0B0" stroke-width="0.9"/><path d="M415.5 32 V34 M415.5 35.5 V37.5 M415.5 39 V41" stroke="#B5B5B5" stroke-width="0.8"/><path d="M418 33.0 H425" stroke="#B0B0B0" stroke-width="0.9"/><path d="M418 36.5 H425" stroke="#B0B0B0" stroke-width="0.9"/><path d="M418 40.0 H425" stroke="#B0B0B0" stroke-width="0.9"/><path d="M441 32.0 H451" stroke="#B0B0B0" stroke-width="0.9"/><path d="M441 34.2 H451" stroke="#B0B0B0" stroke-width="0.9"/><path d="M441 36.4 H451" stroke="#B0B0B0" stroke-width="0.9"/><path d="M441 38.6 H451" stroke="#B0B0B0" stroke-width="0.9"/><path d="M441 40.8 H451" stroke="#B0B0B0" stroke-width="0.9"/><path d="M446 37 H441.5 M443 35.5 L441.5 37 L443 38.5" fill="none" stroke="#999" stroke-width="0.8"/><path d="M457 32.0 H467" stroke="#B0B0B0" stroke-width="0.9"/><path d="M457 34.2 H467" stroke="#B0B0B0" stroke-width="0.9"/><path d="M457 36.4 H467" stroke="#B0B0B0" stroke-width="0.9"/><path d="M457 38.6 H467" stroke="#B0B0B0" stroke-width="0.9"/><path d="M457 40.8 H467" stroke="#B0B0B0" stroke-width="0.9"/><path d="M457 37 H461.5 M460 35.5 L461.5 37 L460 38.5" fill="none" stroke="#999" stroke-width="0.8"/><path d="M474 32 V42 M472.5 33.5 L474 32 L475.5 33.5 M472.5 40.5 L474 42 L475.5 40.5" fill="none" stroke="#AAA" stroke-width="0.8"/><path d="M477.5 34 H483.5" stroke="#B0B0B0" stroke-width="0.9"/><path d="M477.5 37 H483.5" stroke="#B0B0B0" stroke-width="0.9"/><path d="M477.5 40 H483.5" stroke="#B0B0B0" stroke-width="0.9"/><path d="M389 53.5 H399" stroke="#B0B0B0" stroke-width="0.9"/><path d="M389 55.7 H396" stroke="#B0B0B0" stroke-width="0.9"/><path d="M389 57.9 H399" stroke="#B0B0B0" stroke-width="0.9"/><path d="M389 60.1 H396" stroke="#B0B0B0" stroke-width="0.9"/><path d="M389 62.3 H398" stroke="#B0B0B0" stroke-width="0.9"/><path d="M405 53.5 H415" stroke="#B0B0B0" stroke-width="0.9"/><path d="M407 55.7 H413" stroke="#B0B0B0" stroke-width="0.9"/><path d="M405 57.9 H415" stroke="#B0B0B0" stroke-width="0.9"/><path d="M407 60.1 H413" stroke="#B0B0B0" stroke-width="0.9"/><path d="M406 62.3 H414" stroke="#B0B0B0" stroke-width="0.9"/><path d="M421 53.5 H431" stroke="#B0B0B0" stroke-width="0.9"/><path d="M424 55.7 H431" stroke="#B0B0B0" stroke-width="0.9"/><path d="M421 57.9 H431" stroke="#B0B0B0" stroke-width="0.9"/><path d="M424 60.1 H431" stroke="#B0B0B0" stroke-width="0.9"/><path d="M422 62.3 H431" stroke="#B0B0B0" stroke-width="0.9"/><path d="M436.5 53.5 H446.5" stroke="#B0B0B0" stroke-width="0.9"/><path d="M436.5 55.7 H446.5" stroke="#B0B0B0" stroke-width="0.9"/><path d="M436.5 57.9 H446.5" stroke="#B0B0B0" stroke-width="0.9"/><path d="M436.5 60.1 H446.5" stroke="#B0B0B0" stroke-width="0.9"/><path d="M436.5 62.3 H446.5" stroke="#B0B0B0" stroke-width="0.9"/><path d="M450.6 52 V66" stroke="#DDD"/><path d="M455 53.5 H465" stroke="#B8B8B8" stroke-width="0.8"/><path d="M455 55.7 H465" stroke="#B8B8B8" stroke-width="0.8"/><path d="M455 57.9 H465" stroke="#B8B8B8" stroke-width="0.8"/><path d="M455 60.1 H465" stroke="#B8B8B8" stroke-width="0.8"/><path d="M455 62.3 H465" stroke="#B8B8B8" stroke-width="0.8"/><path d="M497.5 27 V37 M500 27 V37 M496.5 36 L497.5 37 L498.5 36 M499 36 L500 37 L501 36" fill="none" stroke="#AAA" stroke-width="0.8"/><path d="M502 37 L504.5 28 L507 37 M503 34 H506" fill="none" stroke="#AAA" stroke-width="0.8"/><rect x="497.5" y="44.5" width="10" height="8" fill="#F3EAF3" stroke="#BBB" stroke-width="0.8"/><path d="M502.5 43 V54 M501 44.5 L502.5 43 L504 44.5 M501 52.5 L502.5 54 L504 52.5" fill="none" stroke="#999" stroke-width="0.8"/><path d="M497 60.5 H504 L503 64 H497 Z" fill="#AAA"/><rect x="501.5" y="63.5" width="6" height="5" fill="#F3EAF3" stroke="#BBB" stroke-width="0.8"/><rect x="530.5" y="26.5" width="95" height="42" fill="#FFFFFF" stroke="#D6D6D6" stroke-width="1"/><rect x="615.5" y="27" width="10" height="14" fill="#E4E4E4"/><path d="M615.5 27 V68.5 M615.5 41 H625.5 M615.5 55 H625.5" stroke="#D6D6D6" stroke-width="1"/><path d="M619.5 34.5 L620.5 33.5 L621.5 34.5" fill="none" stroke="#C0C0C0" stroke-width="0.7"/><path d="M619 47.3 L620.5 48.8 L622 47.3 Z" fill="#444"/><path d="M618.8 60 H622.2 M619 61.5 L620.5 63 L622 61.5 Z" fill="#444" stroke="#444" stroke-width="0.6"/><rect x="533.5" y="28.5" width="10" height="8.5" fill="none" stroke="#555" stroke-width="0.8"/><rect x="535" y="30" width="2" height="2" fill="#2F75C4"/><path d="M535 33.5 H542 M535 35 H542" stroke="#AAA" stroke-width="0.8"/><path d="M547.5 28.5 L556.5 37" stroke="#555" stroke-width="0.8"/><path d="M561.5 28.5 L571 37 M569 37 H571 V35" fill="none" stroke="#555" stroke-width="0.8"/><rect x="575.5" y="29.5" width="9.5" height="7" fill="none" stroke="#555" stroke-width="0.8"/><ellipse cx="594" cy="33" rx="5" ry="3.6" fill="none" stroke="#555" stroke-width="0.8"/><rect x="602.5" y="29.5" width="10" height="7" rx="1.5" fill="none" stroke="#555" stroke-width="0.8"/><path d="M538.5 43 L534 51.5 H543 Z" fill="none" stroke="#555" stroke-width="0.8"/><path d="M547.5 43.5 H551 V51 H556.5" fill="none" stroke="#555" stroke-width="0.8"/><path d="M561.5 43.5 H565 V51 H570.5 M569 49.5 L570.5 51 L569 52.5" fill="none" stroke="#555" stroke-width="0.8"/><path d="M575.5 45.5 H580 V43.5 L584.5 47.5 L580 51.5 V49.5 H575.5 Z" fill="none" stroke="#555" stroke-width="0.8"/><path d="M591.5 43 H596.5 V47.5 H598.5 L594 52 L589.5 47.5 H591.5 Z" fill="none" stroke="#555" stroke-width="0.8"/><path d="M603 44 H608 L612.5 47 V51.5 H603 Z" fill="none" stroke="#555" stroke-width="0.8"/><path d="M537 56.5 C534 58 538 60 536 61 C534.5 62 537 64 539 65" fill="none" stroke="#555" stroke-width="0.8"/><path d="M547.5 57.5 C551 57.5 556 59 557 65" fill="none" stroke="#555" stroke-width="0.8"/><path d="M561.5 64.5 C563 56 566 56 568 60 C570 64 571 64.5 572.5 64.5" fill="none" stroke="#555" stroke-width="0.8"/><path d="M581 56.5 C579.5 56.5 580 60 578.5 60.5 C580 61 579.5 64.5 581 64.5" fill="none" stroke="#555" stroke-width="0.8"/><path d="M592 56.5 C593.5 56.5 593 60 594.5 60.5 C593 61 593.5 64.5 592 64.5" fill="none" stroke="#555" stroke-width="0.8"/><path d="M607.5 56 L608.9 59.3 L612.4 59.5 L609.7 61.8 L610.6 65.2 L607.5 63.3 L604.4 65.2 L605.3 61.8 L602.6 59.5 L606.1 59.3 Z" fill="none" stroke="#555" stroke-width="0.8"/><rect x="648.5" y="31" width="10.5" height="11" fill="#EBC078"/><rect x="644.5" y="27.5" width="7.5" height="7.5" fill="#fff" stroke="#888" stroke-width="0.8"/><rect x="654.5" y="37.5" width="8.5" height="8.5" fill="#fff" stroke="#888" stroke-width="0.8"/><rect x="692.5" y="28.5" width="17" height="17" rx="2.5" fill="#F0ECF0" stroke="#D0D0D0" stroke-width="0.8"/><path d="M712.5 33.5 L703 44 L700.5 47.5 L704 45.5 L713.5 35 Z" fill="#BDBDBD"/><path d="M725.5 31.5 L729.5 27.5 L733.5 31.5 L729.5 35.5 Z" fill="none" stroke="#B5B5B5" stroke-width="0.9"/><path d="M727 26 L728.5 27.5" stroke="#B5B5B5" stroke-width="0.9"/><path d="M723.5 42.5 V50.5 H731.5" fill="none" stroke="#C0C0C0" stroke-width="0.8"/><path d="M725.5 49 L733 41.5" stroke="#A0A0A0" stroke-width="1"/><path d="M724 64 L726.5 59 H734 L731.5 64 Z" fill="#F0F0F0" stroke="#AFAFAF" stroke-width="0.8"/><path d="M724 64 V66 H731.5 L734 61" fill="none" stroke="#AFAFAF" stroke-width="0.8"/><circle cx="833.5" cy="30.5" r="2.6" fill="none" stroke="#2F75C4" stroke-width="1.1"/><path d="M831.5 32.5 L828 36" stroke="#2F75C4" stroke-width="1.3"/><path d="M827 49.6 L830 49.6 M828.6 48.6 L830 49.6 L828.6 50.6" fill="none" stroke="#2F75C4" stroke-width="0.8"/><path d="M830 58.5 V67 L832 65 L834 68.5 L835.3 67.8 L833.5 64.5 L836.3 64.3 Z" fill="#fff" stroke="#777" stroke-width="0.7"/><path d="M883 48 L884.3 49.2 L885.6 48 M879 64 L880.3 65.2 L881.6 64" fill="none" stroke="#666" stroke-width="0.7"/><path d="M924.85 36.9 A8.75 8.75 0 1 1 920.2 29.2" fill="none" stroke="#E24A32" stroke-width="1.6"/><path d="M912.5 36.3 L916 40 L924.6 31" fill="none" stroke="#1F6FB5" stroke-width="1.8"/><path d="M946 44.8 C946 38 950 31 958.5 29.5 C958.3 31 957.8 32.6 957 33.4 L957.3 34.3 C956.4 35.8 955.3 36.8 954 37.4 L954.2 38.3 C952.2 39.8 949.8 40.4 947.6 40.6 C947.1 42 946.8 43.6 946.6 44.9 Z" fill="#1F6FB5"/><path d="M945.5 29.3 L946.3 31 L948 31.8 L946.3 32.6 L945.5 34.3 L944.7 32.6 L943 31.8 L944.7 31 Z M956.5 41.3 L957.1 42.5 L958.3 43.1 L957.1 43.7 L956.5 44.9 L955.9 43.7 L954.7 43.1 L955.9 42.5 Z" fill="#E24A32"/><path d="M985 82.5 L989.5 78 L994 82.5" fill="none" stroke="#555" stroke-width="0.9"/></svg>
<div class="t" style="left:6.50px;top:50.75px;font-size:8.6px;line-height:10.75px;color:#2E2E2E;font-family:'Liberation Sans', sans-serif;transform:scaleX(0.9057);transform-origin:0 0;">Вставить</div>
<div class="t" style="left:6.50px;top:75.43px;font-size:8.3px;line-height:10.38px;color:#2E2E2E;font-family:'Liberation Sans', sans-serif;transform:scaleX(0.8512);transform-origin:0 0;">Буфер обмена</div>
<div class="t" style="left:79.50px;top:50.75px;font-size:8.6px;line-height:10.75px;color:#2E2E2E;font-family:'Liberation Sans', sans-serif;transform:scaleX(0.9488);transform-origin:0 0;">Создать</div>
<div class="t" style="left:79.50px;top:61.40px;font-size:8.6px;line-height:10.75px;color:#2E2E2E;font-family:'Liberation Sans', sans-serif;transform:scaleX(0.9203);transform-origin:0 0;">слайд</div>
<div class="t" style="left:126.50px;top:27.84px;font-size:8.4px;line-height:10.5px;color:#2E2E2E;font-family:'Liberation Sans', sans-serif;letter-spacing:0.024px;">Макет</div>
<div class="t" style="left:126.50px;top:44.44px;font-size:8.4px;line-height:10.5px;color:#2E2E2E;font-family:'Liberation Sans', sans-serif;transform:scaleX(0.9508);transform-origin:0 0;">Восстановить</div>
<div class="t" style="left:126.50px;top:60.44px;font-size:8.4px;line-height:10.5px;color:#2E2E2E;font-family:'Liberation Sans', sans-serif;transform:scaleX(0.9391);transform-origin:0 0;">Раздел</div>
<div class="t" style="left:116.50px;top:75.23px;font-size:8.3px;line-height:10.38px;color:#2E2E2E;font-family:'Liberation Sans', sans-serif;transform:scaleX(0.8417);transform-origin:0 0;">Слайды</div>
<div class="t" style="left:295.00px;top:32.84px;font-size:8.4px;line-height:10.5px;color:#B0B0B0;font-family:'Liberation Sans', sans-serif;transform:scaleX(0.9648);transform-origin:0 0;">22</div>
<div class="t" style="left:194.50px;top:51.81px;font-size:11px;line-height:13.75px;color:#ABABAB;font-family:'Liberation Sans', sans-serif;font-weight:bold">Ж</div>
<div class="t" style="left:212.00px;top:51.81px;font-size:11px;line-height:13.75px;color:#ABABAB;font-family:'Liberation Sans', sans-serif;font-weight:bold;font-style:italic">К</div>
<div class="t" style="left:228.00px;top:51.81px;font-size:11px;line-height:13.75px;color:#ABABAB;font-family:'Liberation Sans', sans-serif;font-weight:bold;text-decoration:underline">Ч</div>
<div class="t" style="left:244.00px;top:51.81px;font-size:11px;line-height:13.75px;color:#ABABAB;font-family:'Liberation Sans', sans-serif;font-weight:bold">S</div>
<div class="t" style="left:256.50px;top:55.21px;font-size:7.5px;line-height:9.38px;color:#B5B5B5;font-family:'Liberation Sans', sans-serif;transform:scaleX(0.9922);transform-origin:0 0;text-decoration:line-through">abc</div>
<div class="t" style="left:274.00px;top:53.73px;font-size:8px;line-height:10.0px;color:#ABABAB;font-family:'Liberation Sans', sans-serif;letter-spacing:0.422px;">AV</div>
<div class="t" style="left:297.50px;top:52.78px;font-size:10px;line-height:12.5px;color:#ABABAB;font-family:'Liberation Sans', sans-serif;letter-spacing:0.766px;">Aa</div>
<div class="t" style="left:327.00px;top:53.67px;font-size:6px;line-height:7.5px;color:#B0B0B0;font-family:'Liberation Sans', sans-serif;">ab</div>
<div class="t" style="left:353.50px;top:51.31px;font-size:11px;line-height:13.75px;color:#ABABAB;font-family:'Liberation Sans', sans-serif;">A</div>
<div class="t" style="left:328.50px;top:31.81px;font-size:11px;line-height:13.75px;color:#ABABAB;font-family:'Liberation Sans', sans-serif;">A</div>
<div class="t" style="left:345.00px;top:34.26px;font-size:9px;line-height:11.25px;color:#ABABAB;font-family:'Liberation Sans', sans-serif;">A</div>
<div class="t" style="left:366.00px;top:32.70px;font-size:7px;line-height:8.75px;color:#B0B0B0;font-family:'Liberation Sans', sans-serif;">A</div>
<div class="t" style="left:266.50px;top:75.43px;font-size:8.3px;line-height:10.38px;color:#2E2E2E;font-family:'Liberation Sans', sans-serif;transform:scaleX(0.8604);transform-origin:0 0;">Шрифт</div>
<div class="t" style="left:436.50px;top:75.43px;font-size:8.3px;line-height:10.38px;color:#2E2E2E;font-family:'Liberation Sans', sans-serif;transform:scaleX(0.9020);transform-origin:0 0;">Абзац</div>
<div class="t" style="left:628.90px;top:50.75px;font-size:8.6px;line-height:10.75px;color:#2E2E2E;font-family:'Liberation Sans', sans-serif;transform:scaleX(0.9845);transform-origin:0 0;">Упорядочить</div>
<div class="t" style="left:682.50px;top:50.75px;font-size:8.6px;line-height:10.75px;color:#B0B0B0;font-family:'Liberation Sans', sans-serif;transform:scaleX(0.9500);transform-origin:0 0;">Экспресс-</div>
<div class="t" style="left:686.50px;top:61.40px;font-size:8.6px;line-height:10.75px;color:#B0B0B0;font-family:'Liberation Sans', sans-serif;transform:scaleX(0.9187);transform-origin:0 0;">стили</div>
<div class="t" style="left:647.50px;top:75.43px;font-size:8.3px;line-height:10.38px;color:#2E2E2E;font-family:'Liberation Sans', sans-serif;transform:scaleX(0.8613);transform-origin:0 0;">Рисование</div>
<div class="t" style="left:736.50px;top:27.84px;font-size:8.4px;line-height:10.5px;color:#B0B0B0;font-family:'Liberation Sans', sans-serif;transform:scaleX(0.9630);transform-origin:0 0;">Заливка фигуры</div>
<div class="t" style="left:736.50px;top:43.44px;font-size:8.4px;line-height:10.5px;color:#B0B0B0;font-family:'Liberation Sans', sans-serif;transform:scaleX(0.9901);transform-origin:0 0;">Контур фигуры</div>
<div class="t" style="left:736.50px;top:59.64px;font-size:8.4px;line-height:10.5px;color:#B0B0B0;font-family:'Liberation Sans', sans-serif;transform:scaleX(0.9313);transform-origin:0 0;">Эффекты фигуры</div>
<div class="t" style="left:839.25px;top:27.84px;font-size:8.4px;line-height:10.5px;color:#2E2E2E;font-family:'Liberation Sans', sans-serif;transform:scaleX(0.9621);transform-origin:0 0;">Найти</div>
<div class="t" style="left:839.25px;top:43.44px;font-size:8.4px;line-height:10.5px;color:#2E2E2E;font-family:'Liberation Sans', sans-serif;transform:scaleX(0.9564);transform-origin:0 0;">Заменить</div>
<div class="t" style="left:839.50px;top:59.44px;font-size:8.4px;line-height:10.5px;color:#2E2E2E;font-family:'Liberation Sans', sans-serif;transform:scaleX(0.9317);transform-origin:0 0;">Выделить</div>
<div class="t" style="left:827.00px;top:40.39px;font-size:6.8px;line-height:8.5px;color:#444;font-family:'Liberation Sans', sans-serif;">a</div>
<div class="t" style="left:830.80px;top:40.01px;font-size:7.2px;line-height:9.0px;color:#8E4DB5;font-family:'Liberation Sans', sans-serif;font-weight:bold">b</div>
<div class="t" style="left:830.50px;top:45.19px;font-size:6.8px;line-height:8.5px;color:#555;font-family:'Liberation Sans', sans-serif;">a</div>
<div class="t" style="left:834.20px;top:45.19px;font-size:6.8px;line-height:8.5px;color:#2F75C4;font-family:'Liberation Sans', sans-serif;">c</div>
<div class="t" style="left:829.50px;top:75.43px;font-size:8.3px;line-height:10.38px;color:#2E2E2E;font-family:'Liberation Sans', sans-serif;transform:scaleX(0.8702);transform-origin:0 0;">Редактирование</div>
<div class="t" style="left:902.20px;top:50.75px;font-size:8.6px;line-height:10.75px;color:#2E2E2E;font-family:'Liberation Sans', sans-serif;transform:scaleX(0.9650);transform-origin:0 0;">Correct</div>
<div class="t" style="left:932.00px;top:50.75px;font-size:8.6px;line-height:10.75px;color:#2E2E2E;font-family:'Liberation Sans', sans-serif;transform:scaleX(0.9271);transform-origin:0 0;">Rephraser</div>
<div class="t" style="left:922.50px;top:75.43px;font-size:8.3px;line-height:10.38px;color:#2E2E2E;font-family:'Liberation Sans', sans-serif;transform:scaleX(0.8671);transform-origin:0 0;">Reverso</div>
</body></html>
